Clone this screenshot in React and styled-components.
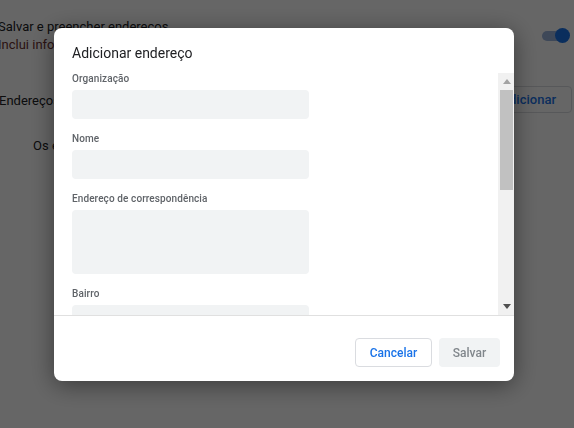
import React from 'react'
import styled, { createGlobalStyle } from 'styled-components'

const GlobalStyle = createGlobalStyle`
    html, body {
        margin: 0;
        padding: 0;
        overflow: hidden;
    }
    body {
        font-family: Roboto, "Liberation Sans", Arial, sans-serif;
        color: #202124;
    }
`

function Toggle() {
    return (
        <ToggleTrack>
            <ToggleKnob />
        </ToggleTrack>
    )
}

function Arrow({ up, color }) {
    return (
        <svg width="8" height="5" viewBox="0 0 8 5">
            <path d={up ? 'M0 5 L4 0 L8 5 Z' : 'M0 0 L8 0 L4 5 Z'} fill={color} />
        </svg>
    )
}

function Field({ label, tall }) {
    return (
        <FieldBlock>
            <FieldLabel>{label}</FieldLabel>
            <FieldInput tall={tall} />
        </FieldBlock>
    )
}

function App() {
    return (
        <>
            <GlobalStyle />
            <Page>
                <SettingRow>
                    <div>
                        <SettingTitle>Salvar e preencher endereços</SettingTitle>
                        <SettingSub>Inclui informações como números de telefone, e-mails e endereços de entrega</SettingSub>
                    </div>
                    <Toggle />
                </SettingRow>
                <SectionRow>
                    <SectionTitle>Endereços</SectionTitle>
                    <OutlineButton>Adicionar</OutlineButton>
                </SectionRow>
                <EmptyText>Os endereços salvos aparecerão aqui</EmptyText>
            </Page>

            <Overlay>
                <Dialog>
                    <DialogTitle>Adicionar endereço</DialogTitle>
                    <DialogBody>
                        <Fields>
                            <Field label="Organização" />
                            <Field label="Nome" />
                            <Field label="Endereço de correspondência" tall />
                            <Field label="Bairro" />
                            <Field label="Cidade" />
                        </Fields>
                        <Scrollbar>
                            <ScrollButton>
                                <Arrow up color="#a3a3a3" />
                            </ScrollButton>
                            <ScrollTrack>
                                <ScrollThumb />
                            </ScrollTrack>
                            <ScrollButton>
                                <Arrow color="#505050" />
                            </ScrollButton>
                        </Scrollbar>
                    </DialogBody>
                    <DialogFooter>
                        <CancelButton>Cancelar</CancelButton>
                        <SaveButton disabled>Salvar</SaveButton>
                    </DialogFooter>
                </Dialog>
            </Overlay>
        </>
    )
}

export default App

const Page = styled.div`
    width: 574px;
    height: 428px;
    box-sizing: border-box;
    background: #fff;
    padding: 18px 0 0 0;
    margin-left: -2px;
    font-size: 13px;
`

const SettingRow = styled.div`
    display: flex;
    justify-content: space-between;
    align-items: center;
    white-space: nowrap;
    overflow: hidden;
`

const SettingTitle = styled.div`
    line-height: 18px;
    color: #202124;
`

const SettingSub = styled.div`
    line-height: 18px;
    color: #6b2f2f;
`

const ToggleTrack = styled.div`
    position: relative;
    width: 26px;
    height: 10px;
    border-radius: 5px;
    background: #9cb4dc;
    margin-right: 4px;
    flex-shrink: 0;
`

const ToggleKnob = styled.div`
    position: absolute;
    right: -2px;
    top: -3px;
    width: 15px;
    height: 15px;
    border-radius: 50%;
    background: #1a73e8;
`

const SectionRow = styled.div`
    display: flex;
    justify-content: space-between;
    align-items: center;
    margin-top: 32px;
    padding-left: 1px;
`

const SectionTitle = styled.div`
    line-height: 18px;
    padding-top: 3px;
`

const OutlineButton = styled.button`
    height: 27px;
    padding: 0 15px;
    border: 1px solid #dadce0;
    border-radius: 4px;
    background: #fff;
    color: #1a73e8;
    font-family: Roboto, "Liberation Sans", Arial, sans-serif;
    font-size: 13px;
    font-weight: 500;
`

const EmptyText = styled.div`
    margin: 24px 0 0 35px;
    line-height: 18px;
`

const Overlay = styled.div`
    position: fixed;
    inset: 0;
    background: rgba(0, 0, 0, 0.6);
    display: flex;
    align-items: flex-start;
    padding: 28px 0 0 54px;
`

const Dialog = styled.div`
    width: 460px;
    height: 353px;
    background: #fff;
    border-radius: 8px;
    box-shadow: 0 4px 24px rgba(0, 0, 0, 0.45);
    display: flex;
    flex-direction: column;
    overflow: hidden;
`

const DialogTitle = styled.div`
    height: 45px;
    box-sizing: border-box;
    padding: 16px 18px 0;
    font-size: 14px;
    line-height: 18px;
    color: #202124;
`

const DialogBody = styled.div`
    display: flex;
    height: 242px;
    overflow: hidden;
`

const Fields = styled.div`
    flex: 1;
    padding: 0 18px;
    overflow: hidden;
`

const FieldBlock = styled.div`
    margin-bottom: 14px;
`

const FieldLabel = styled.div`
    font-size: 10px;
    font-weight: 500;
    line-height: 12px;
    color: #5f6368;
    letter-spacing: 0.1px;
    margin-bottom: 5px;
`

const FieldInput = styled.div`
    width: 237px;
    height: ${p => (p.tall ? '64px' : '29px')};
    border-radius: 4px;
    background: #f1f3f4;
`

const Scrollbar = styled.div`
    width: 16px;
    background: #f1f1f1;
    display: flex;
    flex-direction: column;
`

const ScrollButton = styled.div`
    height: 17px;
    display: flex;
    align-items: center;
    justify-content: center;
    padding-left: 1px;
`

const ScrollTrack = styled.div`
    flex: 1;
    padding: 0 1px 0 2px;
`

const ScrollThumb = styled.div`
    height: 100px;
    background: #c1c1c1;
`

const DialogFooter = styled.div`
    flex: 1;
    border-top: 1px solid #e0e0e0;
    display: flex;
    justify-content: flex-end;
    align-items: flex-start;
    gap: 7px;
    padding: 22px 14px 0;
`

const CancelButton = styled.button`
    width: 77px;
    height: 29px;
    border: 1px solid #dadce0;
    border-radius: 4px;
    background: #fff;
    color: #1a73e8;
    font-family: Roboto, "Liberation Sans", Arial, sans-serif;
    font-size: 12px;
    font-weight: 500;
`

const SaveButton = styled.button`
    width: 61px;
    height: 29px;
    border: none;
    border-radius: 4px;
    background: #f1f3f4;
    color: #80868b;
    font-family: Roboto, "Liberation Sans", Arial, sans-serif;
    font-size: 12px;
    font-weight: 500;
`
